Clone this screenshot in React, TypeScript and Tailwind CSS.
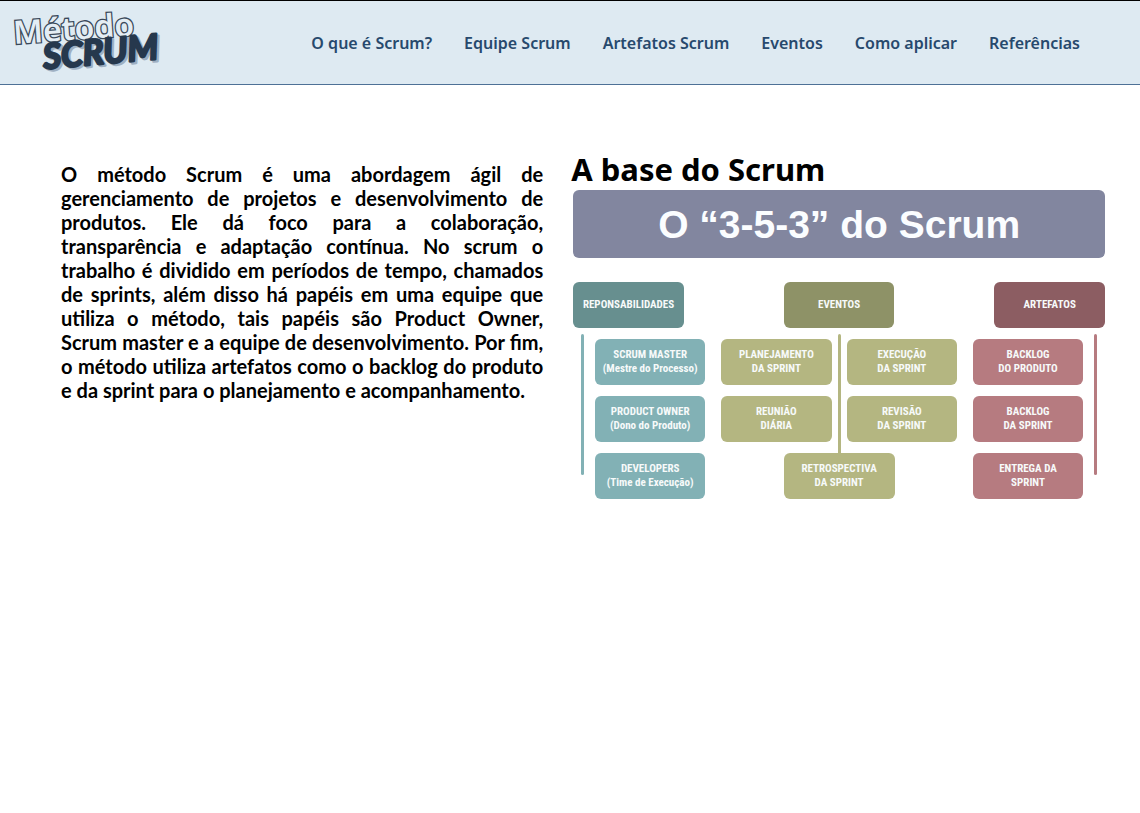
import type { ReactNode } from 'react';

const links = [
  { label: 'O que é Scrum?', href: '#scrum' },
  { label: 'Equipe Scrum', href: '#equipe' },
  { label: 'Artefatos Scrum', href: '#artefatos' },
  { label: 'Eventos', href: '#eventos' },
  { label: 'Como aplicar', href: '#aplicar' },
  { label: 'Referências', href: '#referencias' },
];

function Logo() {
  return (
    <svg viewBox="0 0 172 82" className="h-[82px] w-[172px]" role="img" aria-label="Método Scrum">
      <g transform="rotate(-4 14 43)">
        <text
          x="14"
          y="43"
          fontSize="32"
          fontWeight="600"
          fill="#e4edf4"
          stroke="#3a4859"
          strokeWidth="2.6"
          paintOrder="stroke"
          className="font-['Noto_Sans',sans-serif]"
        >
          Método
        </text>
      </g>
      <g
        transform="rotate(-5 44 67)"
        fontSize="35"
        fontWeight="700"
        fontStyle="italic"
        strokeLinejoin="round"
        className="font-[Lato,sans-serif]"
      >
        <text x="46" y="70" fill="#9fb0c2" stroke="#9fb0c2" strokeWidth="2.5">SCRUM</text>
        <text x="44" y="68" fill="#26384d" stroke="#26384d" strokeWidth="2.5">SCRUM</text>
      </g>
    </svg>
  );
}

const tones = {
  teal: 'bg-[#82b1b5]',
  tealDark: 'bg-[#678f8f]',
  olive: 'bg-[#b4b681]',
  oliveDark: 'bg-[#8e9267]',
  rose: 'bg-[#b67b80]',
  roseDark: 'bg-[#8c5d62]',
};

function Box({ tone, children }: { tone: keyof typeof tones; children: ReactNode }) {
  return (
    <div
      className={`${tones[tone]} flex h-[46px] items-center justify-center rounded-md text-center text-[11px] leading-[14px] font-bold whitespace-nowrap text-[#f7fafa]`}
    >
      <span>{children}</span>
    </div>
  );
}

function Diagram() {
  return (
    <div className="mt-[3px] px-0.5 font-['Roboto_Condensed',Roboto,sans-serif]">
      <div className="flex h-[68px] items-center justify-center rounded-md bg-[#82869f] font-['Liberation_Sans',sans-serif] text-[39px] leading-none font-bold text-[#fbfdff]">
        O “3-5-3” do Scrum
      </div>
      <div className="mt-6 grid grid-cols-[110fr_110fr_110fr] gap-x-[100px]">
        <Box tone="tealDark">REPONSABILIDADES</Box>
        <Box tone="oliveDark">EVENTOS</Box>
        <Box tone="roseDark">ARTEFATOS</Box>
      </div>
      <div className="mt-1.5 flex justify-between px-2">
        <div className="h-[141px] w-[3px] rounded-full bg-[#82b1b5]" />
        <div className="mr-[11px] ml-[11px] grid flex-1 grid-cols-[110fr_236fr_110fr] gap-x-4 pt-[5px]">
          <div className="flex flex-col gap-[11px]">
            <Box tone="teal">SCRUM MASTER<br />(Mestre do Processo)</Box>
            <Box tone="teal">PRODUCT OWNER<br />(Dono do Produto)</Box>
            <Box tone="teal">DEVELOPERS<br />(Time de Execução)</Box>
          </div>
          <div>
            <div className="flex gap-1.5">
              <div className="flex flex-1 flex-col gap-[11px]">
                <Box tone="olive">PLANEJAMENTO<br />DA SPRINT</Box>
                <Box tone="olive">REUNIÃO<br />DIÁRIA</Box>
              </div>
              <div className="-mt-[5px] -mb-[11px] w-[3px] rounded-t-full bg-[#b4b681]" />
              <div className="flex flex-1 flex-col gap-[11px]">
                <Box tone="olive">EXECUÇÃO<br />DA SPRINT</Box>
                <Box tone="olive">REVISÃO<br />DA SPRINT</Box>
              </div>
            </div>
            <div className="mx-auto mt-[11px] w-[47%]">
              <Box tone="olive">RETROSPECTIVA<br />DA SPRINT</Box>
            </div>
          </div>
          <div className="flex flex-col gap-[11px]">
            <Box tone="rose">BACKLOG<br />DO PRODUTO</Box>
            <Box tone="rose">BACKLOG<br />DA SPRINT</Box>
            <Box tone="rose">ENTREGA DA<br />SPRINT</Box>
          </div>
        </div>
        <div className="h-[141px] w-[3px] rounded-full bg-[#b67b80]" />
      </div>
    </div>
  );
}

export default function App() {
  return (
    <div className="min-h-screen bg-white text-black">
      <header className="flex h-[85px] items-center justify-between border-t border-b border-t-black border-b-[#4e7196] bg-[#deeaf2] pr-[60px]">
        <a href="#inicio" className="self-start">
          <Logo />
        </a>
        <nav className="flex gap-8 font-['Noto_Sans',sans-serif] text-base font-semibold whitespace-nowrap text-[#27496d]">
          {links.map((link) => (
            <a key={link.href} href={link.href}>
              {link.label}
            </a>
          ))}
        </nav>
      </header>
      <main className="grid grid-cols-[9fr_10fr] gap-7 pt-[65px] pr-[33px] pl-[61px]">
        <p className="pt-3 text-justify font-[Lato,sans-serif] text-xl leading-6 font-bold">
          O método Scrum é uma abordagem ágil de gerenciamento de projetos e desenvolvimento de
          produtos. Ele dá foco para a colaboração, transparência e adaptação contínua. No scrum o
          trabalho é dividido em períodos de tempo, chamados de sprints, além disso há papéis em uma
          equipe que utiliza o método, tais papéis são Product Owner, Scrum master e a equipe de
          desenvolvimento. Por fim, o método utiliza artefatos como o backlog do produto e da sprint
          para o planejamento e acompanhamento.
        </p>
        <section>
          <h1 className="pt-px font-['Noto_Sans',sans-serif] text-[31px] leading-9 font-bold">
            A base do Scrum
          </h1>
          <Diagram />
        </section>
      </main>
    </div>
  );
}
